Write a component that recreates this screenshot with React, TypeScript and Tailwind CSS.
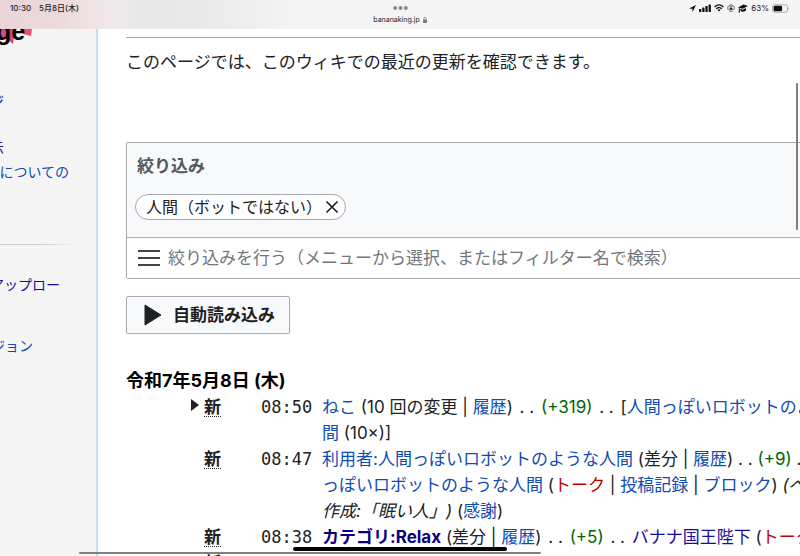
import React from 'react';

const link = 'text-[#0f4bb5]';
const visited = 'text-[#1a0b9c]';
const missing = 'text-[#c00000]';
const plus = 'text-[#006400]';

function A({ c = link, children }: { c?: string; children: React.ReactNode }) {
  return (
    <a href="#" className={c}>
      {children}
    </a>
  );
}

function Dots() {
  return <span className="px-[2px]"> . . </span>;
}

function StatusIcons() {
  return (
    <div className="flex items-center gap-[3px]">
      <svg width="7" height="7" viewBox="0 0 14 14" aria-hidden="true">
        <path d="M14 0 L0 7 L6.6 7.4 L7 14 Z" fill="#111" />
      </svg>
      <svg width="12" height="8" viewBox="0 0 24 16" fill="#111" aria-hidden="true">
        <rect x="0" y="10" width="4.6" height="6" rx="1" />
        <rect x="6.4" y="7" width="4.6" height="9" rx="1" />
        <rect x="12.8" y="4" width="4.6" height="12" rx="1" />
        <rect x="19.2" y="1" width="4.6" height="15" rx="1" />
      </svg>
      <svg width="10" height="8" viewBox="0 0 20 16" fill="none" stroke="#111" strokeWidth="2.6" aria-hidden="true">
        <path d="M1 6 Q10 -2.5 19 6" />
        <path d="M4.4 9.6 Q10 4.4 15.6 9.6" />
        <path d="M10 15 L6.8 11.8 Q10 9 13.2 11.8 Z" fill="#111" stroke="none" />
      </svg>
      <svg width="8" height="8" viewBox="0 0 16 16" fill="none" stroke="#333" strokeWidth="1.4" aria-hidden="true">
        <path d="M2.6 12 A6.6 6.6 0 1 1 13.4 12" />
        <path d="M4 13.6 A6.6 6.6 0 0 0 12 13.6" />
        <rect x="5" y="7.4" width="6" height="4.4" rx="0.8" fill="#333" stroke="none" />
        <path d="M6.3 7.4 V5.8 A1.7 1.7 0 0 1 9.7 5.8 V7.4" />
      </svg>
      <svg width="10" height="9" viewBox="0 0 20 18" fill="#111" aria-hidden="true">
        <path d="M0 7 L11 1 L20 4 L9.5 9.6 Z" />
        <path d="M4 9.5 L9.5 11.6 L16 8.2 V13 Q10 17 5.5 14.6 Z" />
        <path d="M2 8 L3.6 8.8 L3.6 17 L1 17 Z" />
      </svg>
      <span className="text-[8px] leading-3 text-[#222]">63%</span>
      <svg width="18" height="9" viewBox="0 0 36 18" aria-hidden="true">
        <rect x="1" y="1.5" width="30" height="15" rx="4.5" fill="none" stroke="#9a9a9a" strokeWidth="1.6" />
        <rect x="3.2" y="3.6" width="17" height="10.8" rx="2.4" fill="#111" />
        <path d="M33 6.4 Q35.4 9 33 11.6 Z" fill="#9a9a9a" />
      </svg>
    </div>
  );
}

function StatusBar() {
  return (
    <header className="grid h-[29px] shrink-0 grid-cols-3 bg-[linear-gradient(90deg,#ead4d7_0px,#ecdadc_60px,#f0e9ea_115px,#e7e7e7_145px,#e9e9e9_200px,#f5f5f5_300px)] px-[10px] pt-[2px] font-['Inter','Noto_Sans_CJK_JP',sans-serif]">
      <div className="flex h-3 items-center gap-2 text-[8px] font-medium text-[#222]">
        <span>10:30</span>
        <span>5月8日(木)</span>
      </div>
      <div className="flex flex-col items-center">
        <svg width="15" height="12" viewBox="0 0 15 12" fill="#8a8a8a" aria-hidden="true">
          <circle cx="2.2" cy="6" r="2" />
          <circle cx="7.5" cy="6" r="2" />
          <circle cx="12.8" cy="6" r="2" />
        </svg>
        <div className="flex items-center gap-[3px] text-[7px] leading-3 text-[#222]">
          <span>bananaking.jp</span>
          <svg width="4" height="6" viewBox="0 0 8 12" aria-hidden="true">
            <rect x="0" y="5" width="8" height="7" rx="1.4" fill="#777" />
            <path d="M1.8 5 V3 A2.2 2.2 0 0 1 6.2 3 V5" fill="none" stroke="#777" strokeWidth="1.5" />
          </svg>
        </div>
      </div>
      <div className="flex h-3 items-center justify-end">
        <StatusIcons />
      </div>
    </header>
  );
}

function Sidebar() {
  return (
    <nav className="w-[98px] shrink-0 overflow-hidden border-r-2 border-[#bfdff5] bg-[#f5f5f5] text-[14px] leading-6 whitespace-nowrap">
      <div className="relative h-[60px]">
        <svg className="absolute top-0 left-0" width="34" height="18" viewBox="0 0 34 18" aria-hidden="true">
          <path d="M0 0 H15 L13 15 L8 11 L0 8 Z" fill="#cf4c80" />
          <path d="M20 0 H32 L31 7 L23 5 Z" fill="#e8506a" />
        </svg>
        <span className="absolute top-[-10px] left-[-4px] font-['Liberation_Sans',sans-serif] text-[25px] leading-6 font-bold text-black">
          ge
        </span>
      </div>
      <ul>
        <li className="flex w-1 justify-end">
          <A c={visited}>ジ</A>
        </li>
        <li className="mt-[23px] flex w-1 justify-end">
          <A c={visited}>示</A>
        </li>
        <li className="flex w-[69px] justify-end">
          <A>についての</A>
        </li>
      </ul>
      <div className="mt-[60px] h-px w-[76px] bg-linear-to-r from-[#c8ccd1] via-[#c8ccd1] to-transparent" />
      <ul className="pt-[28px]">
        <li className="flex w-[60px] justify-end">
          <A c={visited}>アップロー</A>
        </li>
        <li className="mt-[37px] flex w-[33px] justify-end">
          <A>ジョン</A>
        </li>
      </ul>
    </nav>
  );
}

function Filters() {
  return (
    <section className="-mr-1 mt-[67px] rounded-xs border border-[#a2a9b1] bg-[#f8f9fa]">
      <div className="px-2 pt-[10px] pb-[17px]">
        <h2 className="pl-[2px] font-bold text-[#54595d]">絞り込み</h2>
        <div className="mt-[15px] flex h-[26px] w-fit items-center rounded-full border border-[#a2a9b1] bg-white pr-[6px] pl-[10px]">
          <span className="text-[16px]">人間（ボットではない）</span>
          <button type="button" aria-label="削除" className="ml-[3px]">
            <svg width="14" height="14" viewBox="0 0 14 14" stroke="#202122" strokeWidth="1.7" aria-hidden="true">
              <path d="M1.5 1.5 L12.5 12.5 M12.5 1.5 L1.5 12.5" />
            </svg>
          </button>
        </div>
      </div>
      <div className="flex h-[41px] items-center gap-2 border-t border-[#a2a9b1] bg-white pl-[11px]">
        <button type="button" aria-label="メニュー">
          <svg width="22" height="18" viewBox="0 0 22 18" fill="#404244" aria-hidden="true">
            <rect y="1" width="22" height="2" />
            <rect y="8" width="22" height="2" />
            <rect y="15" width="22" height="2" />
          </svg>
        </button>
        <input
          type="text"
          aria-label="絞り込み検索"
          placeholder="絞り込みを行う（メニューから選択、またはフィルター名で検索）"
          className="min-w-0 flex-1 bg-transparent outline-none placeholder:text-[#72777d]"
        />
      </div>
    </section>
  );
}

function Row({ arrow, time, children }: { arrow?: boolean; time: string; children: React.ReactNode }) {
  return (
    <tr className="align-top">
      <td className="w-[78px] p-0 pl-[64px]">
        {arrow && (
          <svg className="mt-[5px]" width="10" height="12" viewBox="0 0 10 12" aria-hidden="true">
            <path d="M1 0 L9 6 L1 12 Z" fill="#202122" />
          </svg>
        )}
      </td>
      <td className="w-[57px] p-0">
        <abbr
          title="新しいページ"
          className="inline-block h-[23px] border-b border-dotted border-[#202122] font-bold no-underline"
        >
          新
        </abbr>
      </td>
      <td className="w-[61px] p-0 font-['DejaVu_Sans_Mono',monospace]">{time}</td>
      <td className="p-0">{children}</td>
    </tr>
  );
}

function Changes() {
  return (
    <table className="w-full table-fixed border-collapse whitespace-nowrap">
      <tbody>
        <Row arrow time="08:50">
          <A>ねこ</A> (10 回の変更 | <A>履歴</A>)<Dots />
          <span className={plus}>(+319)</span>
          <Dots />[<A>人間っぽいロボットのよ</A>
          <br />
          <A>間</A> (10×)]
        </Row>
        <Row time="08:47">
          <A>利用者:人間っぽいロボットのような人間</A> (差分 | <A>履歴</A>) . .{' '}
          <span className={plus}>(+9)</span> . .
          <br />
          <A>っぽいロボットのような人間</A> (<A c={missing}>トーク</A> | <A>投稿記録</A> | <A>ブロック</A>) <i>(ペ</i>
          <br />
          <i>作成:「眠い人」)</i> (<A>感謝</A>)
        </Row>
        <Row time="08:38">
          <b>
            <A c="text-[#0b0080]">カテゴリ:Relax</A>
          </b>{' '}
          (差分 | <A>履歴</A>)<Dots />
          <span className={plus}>(+5)</span>
          <Dots />
          <A c={visited}>バナナ国王陛下</A> (<A c={missing}>トーク</A>
        </Row>
        <Row time="">{null}</Row>
      </tbody>
    </table>
  );
}

export default function App() {
  return (
    <div className="relative flex h-screen flex-col overflow-hidden bg-white font-['Inter','Noto_Sans_CJK_JP',sans-serif] text-[17px] leading-[26px] text-[#202122] [text-spacing-trim:space-all]">
      <StatusBar />
      <div className="flex min-h-0 flex-1">
        <Sidebar />
        <main className="min-w-0 flex-1 overflow-hidden pt-2 pl-[28px]">
          <hr className="border-t border-[#a2a9b1]" />
          <p className="mt-[11px] whitespace-nowrap">このページでは、このウィキでの最近の更新を確認できます。</p>
          <Filters />
          <button
            type="button"
            className="mt-[17px] flex h-[38px] items-center gap-[11px] rounded-xs border border-[#a2a9b1] bg-[#f8f9fa] pr-[14px] pl-[17px] font-bold"
          >
            <svg width="18" height="22" viewBox="0 0 18 22" aria-hidden="true">
              <path d="M1 1 L17 11 L1 21 Z" fill="#202122" stroke="#202122" strokeLinejoin="round" />
            </svg>
            自動読み込み
          </button>
          <h4 className="mt-[34px] text-[18px] font-bold text-black">令和7年5月8日 (木)</h4>
          <Changes />
        </main>
      </div>
      <div className="absolute top-[83px] right-[2px] h-[147px] w-[2px] rounded-full bg-[#7f7f7f]" />
      <div className="absolute bottom-[2px] left-[79px] h-[2px] w-[462px] rounded-full bg-[#808080]" />
      <div className="absolute bottom-[5px] left-1/2 h-1 w-[214px] -translate-x-1/2 rounded-full bg-black" />
    </div>
  );
}
